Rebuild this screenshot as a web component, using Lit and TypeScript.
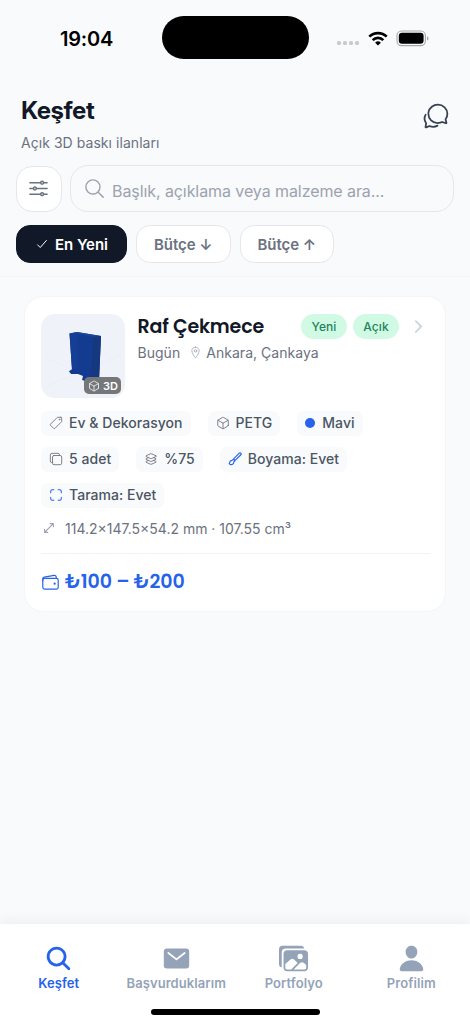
import { LitElement, html, css, svg, TemplateResult } from "lit";
import { customElement, property } from "lit/decorators.js";

const ICONS: Record<string, TemplateResult> = {
  chats: svg`<path d="M431 320.6c-1-3.6 1.2-8.6 3.3-12.2a33.68 33.68 0 012.1-3.1A162 162 0 00464 215c.3-92.2-77.5-167-173.7-167-83.9 0-153.9 57.1-170.3 132.9a160.7 160.7 0 00-3.7 34.2c0 92.3 74.8 169.1 171 169.1 15.3 0 35.9-4.6 47.2-7.7s22.5-7.2 25.4-8.3a26.44 26.44 0 019.3-1.7 26 26 0 0110.1 2l56.7 20.1a13.52 13.52 0 003.9 1 8 8 0 008-8 12.85 12.85 0 00-.5-2.7z"/><path d="M66.46 232a146.23 146.23 0 006.39 152.67c2.31 3.49 3.61 6.19 3.21 8s-11.93 61.87-11.93 61.87a8 8 0 002.71 7.68A8.17 8.17 0 0072 464a7.26 7.26 0 002.91-.6l56.21-22a15.7 15.7 0 0112 .2c18.94 7.38 39.88 12 60.83 12A159.21 159.21 0 00284 432.11"/>`,
  options: svg`<path d="M368 128h80M64 128h240M368 384h80M64 384h240M208 256h240M64 256h80"/><circle cx="336" cy="128" r="32"/><circle cx="176" cy="256" r="32"/><circle cx="336" cy="384" r="32"/>`,
  searchThin: svg`<path d="M221.09 64a157.09 157.09 0 10157.09 157.09A157.1 157.1 0 00221.09 64zM338.29 338.29L448 448"/>`,
  check: svg`<path stroke-width="36" d="M416 128L192 384l-96-96"/>`,
  pin: svg`<path d="M256 48c-79.5 0-144 61.39-144 137 0 87 96 224.87 131.25 272.49a15.77 15.77 0 0025.5 0C304 409.89 400 272.07 400 185c0-75.61-64.5-137-144-137z"/><circle cx="256" cy="192" r="48"/>`,
  chevron: svg`<path stroke-width="48" d="M184 112l144 144-144 144"/>`,
  tag: svg`<path d="M435.25 48h-122.9a14.46 14.46 0 00-10.2 4.2L56.45 297.9a28.85 28.85 0 000 40.7l117 117a28.85 28.85 0 0040.7 0L459.75 210a14.46 14.46 0 004.2-10.2v-123a28.66 28.66 0 00-28.7-28.8z"/><circle cx="384" cy="128" r="20" fill="currentColor" stroke-width="16"/>`,
  cube: svg`<path d="M448 341.37V170.61A32 32 0 00432.11 143l-152-88.46a47.94 47.94 0 00-48.24 0L79.89 143A32 32 0 0064 170.61v170.76A32 32 0 0079.89 369l152 88.46a48 48 0 0048.24 0l152-88.46A32 32 0 00448 341.37z"/><path d="M69 153.99l187 110 187-110M256 463.99v-200"/>`,
  copy: svg`<rect x="128" y="128" width="336" height="336" rx="57"/><path d="M383.5 128l.5-24a56.16 56.16 0 00-56-56H112a64.19 64.19 0 00-64 64v216a56.16 56.16 0 0056 56h24"/>`,
  layers: svg`<path d="M434.8 137.65l-149.36-68.1c-16.19-7.4-42.69-7.4-58.88 0L77.3 137.65c-17.6 8-17.6 21.09 0 29.09l148 67.5c16.89 7.7 44.69 7.7 61.58 0l148-67.5c17.52-8 17.52-21.1-.08-29.09zM160 308.52l-82.7 37.11c-17.6 8-17.6 21.1 0 29.1l148 67.5c16.89 7.69 44.69 7.69 61.58 0l148-67.5c17.6-8 17.6-21.1 0-29.1l-79.94-38.47"/><path d="M160 204.48l-82.8 37.16c-17.6 8-17.6 21.1 0 29.1l148 67.49c16.89 7.7 44.69 7.7 61.58 0l148-67.49c17.7-8 17.7-21.1.1-29.1L352 204.48"/>`,
  brush: svg`<path stroke-width="42" d="M470 44c-24-18-50-8-66 8L196 262c28 8 50 28 56 56L462 110c18-18 24-46 8-66zM196 262c-14 26-30 38-58 42-38 4-70 32-74 70-2 26-10 34-20 48 24 32 68 46 106 34 40-14 62-44 62-80 2-26 18-40 40-58M196 262l56 56"/>`,
  scan: svg`<path stroke-width="38" d="M336 448h56a56 56 0 0056-56v-56M448 176v-56a56 56 0 00-56-56h-56M176 448h-56a56 56 0 01-56-56v-56M64 176v-56a56 56 0 0156-56h56"/>`,
  resize: svg`<path stroke-width="40" d="M304 96h112v112M405.77 106.2L111.98 400.02M208 416H96V304"/>`,
  wallet: svg`<rect x="48" y="144" width="416" height="288" rx="48"/><path d="M411.36 144v-30A50 50 0 00352 64.9L88.64 109.85A50 50 0 0048 159v49"/><circle cx="368" cy="288" r="30" fill="currentColor" stroke="none"/>`,
  search: svg`<path fill="currentColor" stroke="none" d="M456.69 421.39L362.6 327.3a173.81 173.81 0 0034.84-104.58C397.44 126.38 319.06 48 222.72 48S48 126.38 48 222.72s78.38 174.72 174.72 174.72A173.81 173.81 0 00327.3 362.6l94.09 94.09a25 25 0 0035.3-35.3zM97.92 222.72a124.8 124.8 0 11124.8 124.8 124.95 124.95 0 01-124.8-124.8z"/>`,
  mail: svg`<path fill="currentColor" stroke="none" d="M424 80H88a56.06 56.06 0 00-56 56v240a56.06 56.06 0 0056 56h336a56.06 56.06 0 0056-56V136a56.06 56.06 0 00-56-56zm-14.18 92.63l-144 112a16 16 0 01-19.64 0l-144-112a16 16 0 1119.64-25.26L256 251.73l134.18-104.36a16 16 0 0119.64 25.26z"/>`,
  images: svg`<path fill="currentColor" stroke="none" d="M450.29 112H142c-34 0-62 27.51-62 61.33v245.34c0 33.82 28 61.33 62 61.33h308c34 0 62-26.18 62-60V173.33c0-33.82-27.68-61.33-61.71-61.33zm-77.15 61.34a46 46 0 11-46.28 46 46.19 46.19 0 0146.28-46.01zm-231.55 276c-17 0-29.86-13.75-29.86-30.66v-64.83l90.46-80.79a46.54 46.54 0 0163.44 1.83L328.27 337l-113 112.33zM480 418.67a30.67 30.67 0 01-30.71 30.66H259L376.08 333a46.24 46.24 0 0159.44-.16L480 370.59z"/><path fill="currentColor" stroke="none" d="M384 32H64A64 64 0 000 96v256a64.11 64.11 0 0048 62V152a72 72 0 0172-72h326a64.11 64.11 0 00-62-48z"/>`,
  person: svg`<path fill="currentColor" stroke="none" d="M332.64 64.58C313.18 43.57 286 32 256 32c-30.16 0-57.43 11.5-76.8 32.38-19.58 21.11-29.12 49.8-26.88 80.78C156.76 206.28 203.27 256 256 256s99.16-49.71 103.67-110.82c2.27-30.7-7.33-59.33-27.03-80.6zM432 480H80a31 31 0 01-24.2-11.13c-6.5-7.77-9.12-18.38-7.18-29.11C57.06 392.94 83.4 353.61 124.8 326c36.78-24.51 83.37-38 131.2-38s94.42 13.5 131.2 38c41.4 27.6 67.74 66.93 76.18 113.75 1.94 10.73-.68 21.34-7.18 29.11A31 31 0 01432 480z"/>`,
};

@customElement("app-icon")
class AppIcon extends LitElement {
  @property() name = "";
  static styles = css`
    :host { display: block; flex: none; width: 14px; height: 14px; }
    svg { display: block; width: 100%; height: 100%; }
  `;
  render() {
    return html`<svg viewBox="0 0 512 512" fill="none" stroke="currentColor" stroke-width="32" stroke-linecap="round" stroke-linejoin="round">${ICONS[this.name]}</svg>`;
  }
}

@customElement("status-bar")
class StatusBar extends LitElement {
  static styles = css`
    :host { display: grid; grid-template-columns: 161.5px 147px 161.5px; height: 76px; align-items: center; }
    .time { padding-left: 60px; padding-top: 1px; font-size: 20px; font-weight: 600; color: #000; letter-spacing: -0.2px; }
    .island { height: 43px; margin-top: -1px; border-radius: 22px; background: #000; }
    .signals { display: flex; align-items: center; padding-left: 28.5px; }
    .dots { display: flex; gap: 2px; padding-top: 10px; }
    .dots i { width: 4px; height: 4px; border-radius: 1.5px; background: #c8cacc; }
    .wifi { width: 20px; height: 15px; margin-left: 8.5px; }
    .battery { width: 33px; height: 17px; margin-left: 8.5px; }
  `;
  render() {
    return html`
      <div class="time">19:04</div>
      <div class="island"></div>
      <div class="signals">
        <div class="dots"><i></i><i></i><i></i><i></i></div>
        <svg class="wifi" viewBox="0 0 20 15" fill="none" stroke="#000" stroke-width="2.7">
          <path d="M1.3 5.6a12.5 12.5 0 0 1 17.4 0M4.7 9.1a7.6 7.6 0 0 1 10.6 0"/>
          <path d="M10 14.6L7.1 11.7a4.2 4.2 0 0 1 5.8 0z" fill="#000" stroke="none"/>
        </svg>
        <svg class="battery" viewBox="0 0 33 17">
          <rect x="1" y="1" width="28.4" height="14.6" rx="4.6" fill="none" stroke="#a5a6a8" stroke-width="1.1"/>
          <rect x="2.8" y="2.8" width="24.8" height="11" rx="3.2"/>
          <path d="M31 6.2c2 .8 2 3.6 0 4.4z" fill="#a5a6a8"/>
        </svg>
      </div>`;
  }
}

@customElement("listing-card")
class ListingCard extends LitElement {
  static styles = css`
    :host { display: block; box-sizing: border-box; margin: 19px 24px 0; height: 316px; padding: 17px 15px 0 16px; background: #fff; border: 1px solid #f3f5f8; border-radius: 19px; }
    .top { display: flex; }
    .thumb { position: relative; width: 84px; height: 84px; border-radius: 14px; overflow: hidden; background: #eff3f9; flex: none; }
    .thumb > svg { display: block; }
    .badge3d { position: absolute; right: 4px; bottom: 4px; display: flex; align-items: center; gap: 3px; width: 37px; height: 17px; box-sizing: border-box; padding-left: 4px; border-radius: 5px; background: #757779; color: #fff; font-size: 11px; font-weight: 600; }
    .badge3d app-icon { width: 12px; height: 12px; }
    .info { flex: 1; padding-left: 12.5px; }
    .row { display: flex; align-items: center; height: 25px; }
    .title { width: 163.5px; white-space: nowrap; font: 600 19px/25px Poppins, Inter, sans-serif; color: #111827; letter-spacing: -0.17px; }
    .pill { height: 25px; line-height: 25px; border-radius: 13px; background: #d1fae5; color: #22845c; font-size: 12px; font-weight: 500; text-align: center; width: 46px; margin-right: 6px; letter-spacing: 0.1px; }
    .chev { width: 19px; height: 19px; margin-left: 4px; color: #cbd5e1; }
    .meta { display: flex; align-items: center; height: 20px; margin-top: 3px; font-size: 14px; color: #6b7280; letter-spacing: 0.03px; }
    .meta app-icon { width: 13px; height: 13px; margin: 0 4px 0 9px; color: #9ca3af; }
    .chips { display: grid; gap: 11px; margin-top: 12.5px; }
    .line { display: flex; gap: 17px; }
    .chip { display: flex; align-items: center; gap: 6px; height: 25px; box-sizing: border-box; padding: 0 8px; border-radius: 7px; background: #f8fafc; color: #4b5563; font-size: 14px; font-weight: 500; white-space: nowrap; letter-spacing: 0.04px; }
    .chip span { margin-top: -1px; }
    .chip app-icon { color: #6b7280; }
    .chip.blue app-icon { color: #2563eb; }
    .dot { width: 10px; height: 10px; border-radius: 50%; background: #2563eb; border: 0; margin-right: 1px; }
    .size { display: flex; align-items: center; gap: 9px; height: 20px; margin-top: 10.5px; padding-left: 1px; font-size: 14px; color: #6b7280; }
    .size app-icon { color: #9ca3af; }
    .price { display: flex; align-items: center; gap: 5px; margin-top: 15px; padding-top: 18px; height: 20px; border-top: 1px solid #f1f3f6; color: #2563eb; font: 600 19px/20px Poppins, Inter, sans-serif; letter-spacing: -0.15px; }
    .price app-icon { width: 19px; height: 19px; }
  `;
  render() {
    const chip = (icon: string, text: string, blue = false) =>
      html`<div class="chip ${blue ? "blue" : ""}"><app-icon name=${icon}></app-icon><span>${text}</span></div>`;
    return html`
      <div class="top">
        <div class="thumb">
          <svg width="84" height="84" viewBox="0 0 84 84">
            <path d="M4 44L27 53M60 50L81 40M6 72L30 62" stroke="#eaeff5" fill="none"/>
            <path d="M28.5 19.5L36 18L60 22L58 67L45 65L42 60L35 60L28 58L31 55Z" fill="#133c91"/>
            <path d="M28.5 19.5L36 18.5L37 56L31 56Z" fill="#153e94"/>
            <path d="M28.5 19.5L36 18L60 22L53 23L36 19.5Z" fill="#1a469f"/>
            <path d="M52 23L60 22L58 67L50 65Z" fill="#15387f"/>
            <path d="M28 57L33 55L43 58L50 62L58 63L57 68L47 68L41 66L42 62L37 60L30 60Z" fill="#123a93"/>
          </svg>
          <div class="badge3d"><app-icon name="cube"></app-icon>3D</div>
        </div>
        <div class="info">
          <div class="row">
            <div class="title">Raf Çekmece</div>
            <div class="pill">Yeni</div>
            <div class="pill">Açık</div>
            <app-icon class="chev" name="chevron"></app-icon>
          </div>
          <div class="meta">Bugün<app-icon name="pin"></app-icon>Ankara, Çankaya</div>
        </div>
      </div>
      <div class="chips">
        <div class="line">
          ${chip("tag", "Ev & Dekorasyon")}${chip("cube", "PETG")}
          <div class="chip"><i class="dot"></i><span>Mavi</span></div>
        </div>
        <div class="line">${chip("copy", "5 adet")}${chip("layers", "%75")}${chip("brush", "Boyama: Evet", true)}</div>
        <div class="line">${chip("scan", "Tarama: Evet", true)}</div>
      </div>
      <div class="size"><app-icon name="resize"></app-icon>114.2×147.5×54.2 mm · 107.55 cm³</div>
      <div class="price"><app-icon name="wallet"></app-icon>₺100 – ₺200</div>`;
  }
}

@customElement("app-root")
class AppRoot extends LitElement {
  static styles = css`
    :host { display: flex; flex-direction: column; height: 1024px; background: #f8fafc; font-family: Inter, sans-serif; overflow: hidden; }
    header { box-sizing: border-box; height: 201px; border-bottom: 1px solid #f1f3f6; padding: 0 16px; }
    .head { display: flex; justify-content: space-between; height: 89px; padding: 19px 5px 0; box-sizing: border-box; }
    h1 { margin: 0; font-size: 24px; line-height: 32px; font-weight: 700; color: #111827; letter-spacing: -0.5px; }
    .sub { font-size: 14px; line-height: 20px; margin-top: 6px; color: #6b7280; letter-spacing: 0.05px; }
    .head app-icon { width: 28px; height: 28px; margin-top: 7px; margin-right: -0.5px; color: #374151; }
    .find { display: flex; align-items: center; gap: 8px; height: 47px; }
    .filter { width: 46px; height: 46px; box-sizing: border-box; border: 1px solid #e5e7eb; border-radius: 16px; background: #fff; display: grid; place-items: center; color: #6b7280; }
    .filter app-icon { width: 23px; height: 23px; margin-right: 1px; }
    .field { flex: 1; height: 47px; box-sizing: border-box; border: 1px solid #e5e7eb; border-radius: 18px; display: flex; align-items: center; padding-left: 12px; gap: 6px; color: #9ca3af; font-size: 16px; letter-spacing: -0.08px; }
    .field app-icon { width: 23px; height: 23px; }
    .field span { padding-top: 5px; }
    .sorts { display: flex; gap: 9px; margin-top: 13px; }
    .sort { box-sizing: border-box; height: 38px; width: 94.5px; border: 1px solid #e5e7eb; border-radius: 14px; background: #fff; color: #6b7280; font-size: 15px; font-weight: 600; letter-spacing: -0.05px; display: flex; align-items: center; justify-content: center; gap: 6px; white-space: nowrap; }
    .sort.on { width: 111px; background: #111827; border-color: #111827; color: #fff; }
    .sort app-icon { width: 14px; height: 14px; }
    main { flex: 1; }
    nav { height: 100px; background: #fff; box-shadow: 0 -3px 14px rgba(15, 23, 42, 0.05); display: flex; flex-direction: column; align-items: center; }
    .tabs { display: grid; grid-template-columns: repeat(4, 1fr); width: 100%; height: 84.5px; }
    .tab { display: flex; flex-direction: column; align-items: center; padding-top: 20px; gap: 1px; color: #94a3b8; font-size: 13px; line-height: 18px; font-weight: 600; letter-spacing: 0.08px; }
    .tab.on { color: #2563eb; }
    .tab app-icon { width: 29px; height: 29px; }
    .home { width: 169px; height: 6px; border-radius: 3px; background: #000; }
  `;
  render() {
    const tab = (icon: string, text: string, on = false) =>
      html`<div class="tab ${on ? "on" : ""}"><app-icon name=${icon}></app-icon><span>${text}</span></div>`;
    return html`
      <status-bar></status-bar>
      <header>
        <div class="head">
          <div><h1>Keşfet</h1><div class="sub">Açık 3D baskı ilanları</div></div>
          <app-icon name="chats"></app-icon>
        </div>
        <div class="find">
          <div class="filter"><app-icon name="options"></app-icon></div>
          <div class="field"><app-icon name="searchThin"></app-icon><span>Başlık, açıklama veya malzeme ara...</span></div>
        </div>
        <div class="sorts">
          <div class="sort on"><app-icon name="check"></app-icon>En Yeni</div>
          <div class="sort">Bütçe ↓</div>
          <div class="sort">Bütçe ↑</div>
        </div>
      </header>
      <main><listing-card></listing-card></main>
      <nav>
        <div class="tabs">
          ${tab("search", "Keşfet", true)}${tab("mail", "Başvurduklarım")}${tab("images", "Portfolyo")}${tab("person", "Profilim")}
        </div>
        <div class="home"></div>
      </nav>`;
  }
}
